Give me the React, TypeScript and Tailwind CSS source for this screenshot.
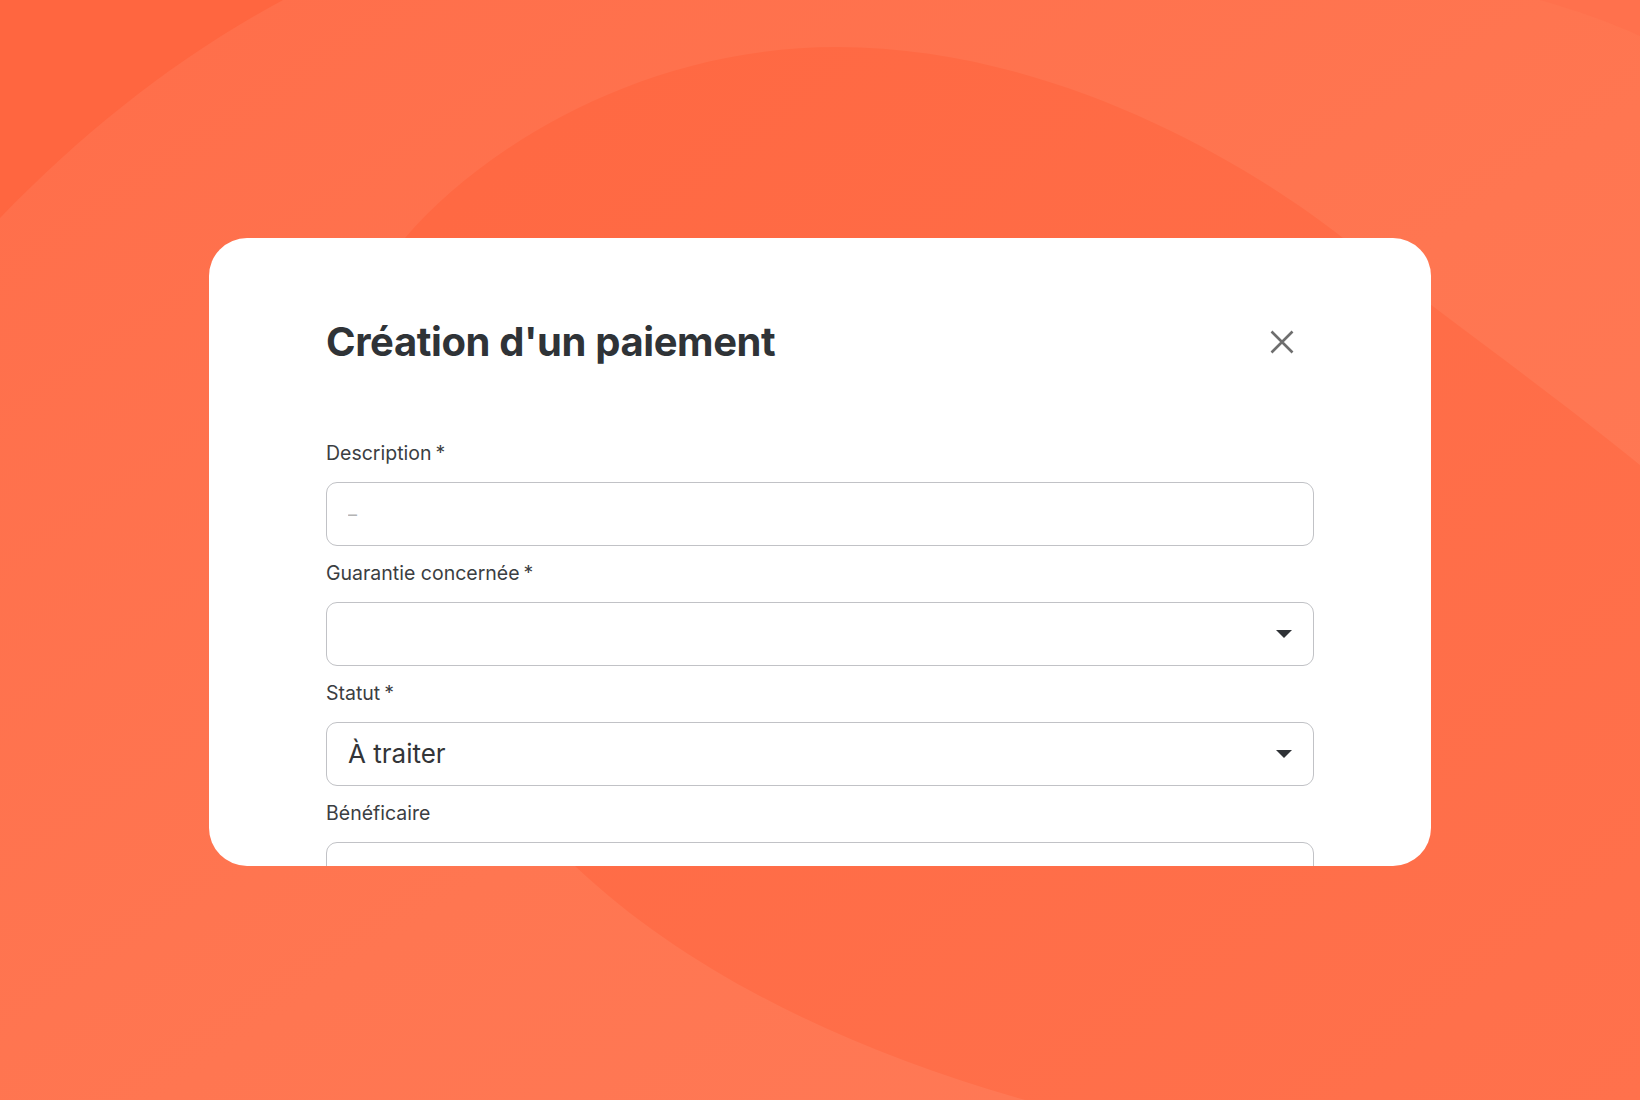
import React from 'react'

// ── Background: warm orange waves ────────────────────────────────────

function Waves() {
  return (
    <svg
      className="pointer-events-none absolute inset-0 h-full w-full"
      viewBox="0 0 1640 1100"
      preserveAspectRatio="none"
      aria-hidden
    >
      <defs>
        <linearGradient id="band" x1="0" y1="0" x2="1" y2="1">
          <stop offset="0" stopColor="#ff6e4a" />
          <stop offset="0.55" stopColor="#ff7651" />
          <stop offset="1" stopColor="#ff7a58" />
        </linearGradient>
        <linearGradient id="dome" x1="0" y1="0" x2="1" y2="1">
          <stop offset="0" stopColor="#ff6842" />
          <stop offset="1" stopColor="#ff714c" />
        </linearGradient>
      </defs>
      <rect width="1640" height="1100" fill="url(#band)" />
      <path d="M0 0 L283 0 C180 55 85 130 0 218 Z" fill="#ff6640" />
      <path d="M1540 0 L1640 0 L1640 36 C1610 22 1575 10 1540 0 Z" fill="#ff714d" />
      <path
        d="M837 47 C640 47 480 150 405 238 C330 330 360 640 575 866 C690 975 850 1050 1025 1100 L1640 1100 L1640 465 C1560 400 1450 320 1343 238 C1230 150 1040 47 837 47 Z"
        fill="url(#dome)"
      />
    </svg>
  )
}

function Caret() {
  return (
    <svg width="16" height="8" viewBox="0 0 16 8" aria-hidden>
      <path d="M0 0h16L8 8z" fill="#2f3236" />
    </svg>
  )
}

function Field({ label, required, children }: { label: string; required?: boolean; children: React.ReactNode }) {
  return (
    <div className="mb-[13px]">
      <label className="mb-[15px] block h-7 text-[19.5px] leading-7 text-[#3b3e42]">
        {label}
        {required && <span className="ml-[4px]">*</span>}
      </label>
      {children}
    </div>
  )
}

const box =
  'flex h-16 w-full items-center rounded-[11px] border-[1.5px] border-[#c1c2c6] bg-white pl-[21px] pr-[21px]'

export default function App() {
  return (
    <div
      className="relative flex h-[1100px] w-full items-center justify-center overflow-hidden bg-[#ff6e4a]"
      style={{ fontFamily: 'Inter, "Noto Sans", sans-serif' }}
    >
      <Waves />

      <div className="relative mt-[4px] h-[628px] w-[1222px] overflow-hidden rounded-[38px] bg-white px-[117px] pt-[82px]">
        <div className="flex items-center justify-between">
          <h1 className="text-[40px] font-bold leading-[44px] tracking-[-0.01em] text-[#2f3337]">
            Création d'un paiement
          </h1>
          <button className="mr-5 text-[#6e6e6e]" aria-label="Fermer">
            <svg width="24" height="24" viewBox="0 0 24 24" fill="none" stroke="currentColor" strokeWidth="2.6">
              <path d="M1.5 1.5l21 21M22.5 1.5l-21 21" />
            </svg>
          </button>
        </div>

        <form className="mt-[75px]">
          <Field label="Description" required>
            <div className={box}>
              <input
                placeholder="–"
                className="w-full bg-transparent text-[18px] text-[#333] placeholder-[#b4b4b4] outline-none"
              />
            </div>
          </Field>

          <Field label="Guarantie concernée" required>
            <div className={box}>
              <span className="flex-1" />
              <Caret />
            </div>
          </Field>

          <Field label="Statut" required>
            <div className={box}>
              <span className="flex-1 text-[26px] leading-8 text-[#333538]">À traiter</span>
              <Caret />
            </div>
          </Field>

          <Field label="Bénéficaire">
            <div className={box} />
          </Field>
        </form>
      </div>
    </div>
  )
}
